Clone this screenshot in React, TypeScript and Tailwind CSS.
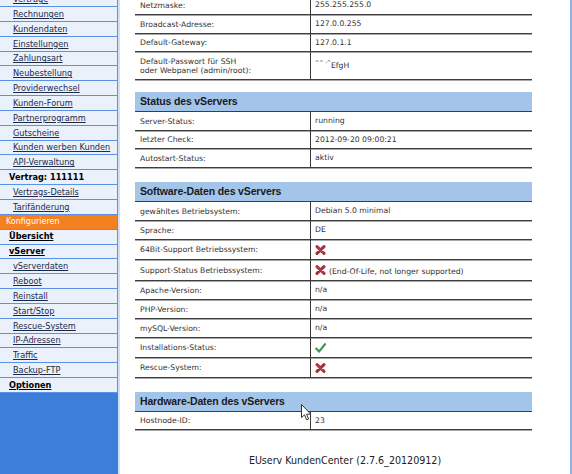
import React from "react";

type Item = { label: string; kind: "sub" | "top" | "active" };

const items: Item[] = [
  { label: "Verträge", kind: "sub" },
  { label: "Rechnungen", kind: "sub" },
  { label: "Kundendaten", kind: "sub" },
  { label: "Einstellungen", kind: "sub" },
  { label: "Zahlungsart", kind: "sub" },
  { label: "Neubestellung", kind: "sub" },
  { label: "Providerwechsel", kind: "sub" },
  { label: "Kunden-Forum", kind: "sub" },
  { label: "Partnerprogramm", kind: "sub" },
  { label: "Gutscheine", kind: "sub" },
  { label: "Kunden werben Kunden", kind: "sub" },
  { label: "API-Verwaltung", kind: "sub" },
  { label: "Vertrag: 111111", kind: "top" },
  { label: "Vertrags-Details", kind: "sub" },
  { label: "Tarifänderung", kind: "sub" },
  { label: "Konfigurieren", kind: "active" },
  { label: "Übersicht", kind: "top" },
  { label: "vServer", kind: "top" },
  { label: "vServerdaten", kind: "sub" },
  { label: "Reboot", kind: "sub" },
  { label: "Reinstall", kind: "sub" },
  { label: "Start/Stop", kind: "sub" },
  { label: "Rescue-System", kind: "sub" },
  { label: "IP-Adressen", kind: "sub" },
  { label: "Traffic", kind: "sub" },
  { label: "Backup-FTP", kind: "sub" },
  { label: "Optionen", kind: "top" },
];

const RedX = () => (
  <svg width="11" height="10" viewBox="0 0 11 10" className="shrink-0">
    <path d="M2 1.6 L9 8.4 M9 1.6 L2 8.4" stroke="#a5303a" strokeWidth="3" strokeLinecap="round" />
    <path d="M2.5 2 L8.5 8" stroke="#c9545c" strokeWidth="0.8" strokeLinecap="round" />
  </svg>
);

const Check = () => (
  <svg width="11" height="10" viewBox="0 0 11 10" className="shrink-0">
    <path d="M1.2 5.6 L4 8.6 L10 1.2" stroke="#3a9a52" strokeWidth="2.2" fill="none" strokeLinecap="round" strokeLinejoin="round" />
  </svg>
);

type Row = { label: React.ReactNode; value: React.ReactNode; h: string };

function Table({ rows }: { rows: Row[] }) {
  return (
    <div>
      {rows.map((r, i) => (
        <div
          key={i}
          className={`flex ${r.h} border-b border-[#3e3e3e] shadow-[0_1px_0_#a8a8a8]`}
        >
          <div className="w-[175px] shrink-0 pl-[5px] flex items-center leading-[9px]">{r.label}</div>
          <div className="flex-1 border-l border-[#3a3a3a] pl-[4px] flex items-center gap-[3px]">{r.value}</div>
        </div>
      ))}
    </div>
  );
}

function Header({ title }: { title: string }) {
  return (
    <div className="h-[20px] bg-[#a3c5e9] border-b border-[#3e3e3e] flex items-center pl-[5px] text-[10.5px] font-bold text-[#1b1b1b] [font-family:'Liberation_Sans',Arial,sans-serif] tracking-[-0.15px]">
      {title}
    </div>
  );
}

export default function App() {
  return (
    <div className="w-[572px] h-[474px] overflow-hidden flex bg-white [font-family:'DejaVu_Sans',Verdana,sans-serif]">
      {/* Sidebar */}
      <div className="w-[120px] shrink-0 flex flex-col border-r-2 border-[#cfe0f7] bg-[#3d7edb]">
        <div className="-mt-[7.8px] flex flex-col">
          {items.map((it, i) => {
            if (it.kind === "active") {
              return (
                <div
                  key={i}
                  className="h-[14.85px] bg-[#f4811f] border-b border-r border-[#5a92e6] flex items-center pl-[6px] text-[8px] text-white"
                >
                  {it.label}
                </div>
              );
            }
            return (
              <div
                key={i}
                className={`h-[14.85px] bg-[#eaf1fb] border-b border-r border-[#5a92e6] flex items-center text-[8.2px] ${
                  it.kind === "top" ? "pl-[9px] font-bold text-black" : "pl-[13px] text-[#1c2a4a]"
                }`}
              >
                <span className={it.kind === "top" && it.label.startsWith("Vertrag") ? "" : "underline underline-offset-[1px]"}>
                  {it.label}
                </span>
              </div>
            );
          })}
        </div>
      </div>

      {/* Main */}
      <div className="flex-1 border-r-2 border-[#8db3ea] relative">
        <div className="-mt-[4px] ml-[15px] w-[397px] text-[7.7px] text-[#333]">
          <Table
            rows={[
              { label: "Netzmaske:", value: "255.255.255.0", h: "h-[19px]" },
              { label: "Broadcast-Adresse:", value: "127.0.0.255", h: "h-[19px]" },
              { label: "Default-Gateway:", value: "127.0.1.1", h: "h-[18px]" },
              {
                label: (
                  <span>
                    Default-Passwort für SSH
                    <br />
                    oder Webpanel (admin/root):
                  </span>
                ),
                value: (
                  <span>
                    <span className="text-[5px] align-super">^^ -^</span>EfgH
                  </span>
                ),
                h: "h-[28px]",
              },
            ]}
          />

          <div className="mt-[12px]">
            <Header title="Status des vServers" />
            <Table
              rows={[
                { label: "Server-Status:", value: "running", h: "h-[19px]" },
                { label: "letzter Check:", value: "2012-09-20 09:00:21", h: "h-[18px]" },
                { label: "Autostart-Status:", value: "aktiv", h: "h-[19px]" },
              ]}
            />
          </div>

          <div className="mt-[14px]">
            <Header title="Software-Daten des vServers" />
            <Table
              rows={[
                { label: "gewähltes Betriebsystem:", value: "Debian 5.0 minimal", h: "h-[19px]" },
                { label: "Sprache:", value: "DE", h: "h-[19px]" },
                { label: "64Bit-Support Betriebssystem:", value: <RedX />, h: "h-[20px]" },
                {
                  label: "Support-Status Betriebssystem:",
                  value: (
                    <>
                      <RedX />
                      <span className="mt-[3px]">(End-Of-Life, not longer supported)</span>
                    </>
                  ),
                  h: "h-[21px]",
                },
                { label: "Apache-Version:", value: "n/a", h: "h-[19px]" },
                { label: "PHP-Version:", value: "n/a", h: "h-[19px]" },
                { label: "mySQL-Version:", value: "n/a", h: "h-[19px]" },
                { label: "Installations-Status:", value: <Check />, h: "h-[20px]" },
                { label: "Rescue-System:", value: <RedX />, h: "h-[20px]" },
              ]}
            />
          </div>

          <div className="mt-[14px]">
            <Header title="Hardware-Daten des vServers" />
            <Table rows={[{ label: "Hostnode-ID:", value: "23", h: "h-[18px]" }]} />
          </div>
        </div>

        <div className="mt-[23px] text-center text-[10.6px] text-[#222] [font-family:'DejaVu_Sans_Condensed','Liberation_Sans',sans-serif]">
          EUserv KundenCenter (2.7.6_20120912)
        </div>

        {/* mouse cursor */}
        <svg
          className="absolute left-[181px] top-[404px]"
          width="12"
          height="18"
          viewBox="0 0 12 18"
        >
          <path
            d="M0.5 0.5 L0.5 13.5 L3.5 10.8 L5.6 15.8 L7.6 15 L5.6 10.2 L9.8 10.2 Z"
            fill="#ffffff"
            stroke="#333"
            strokeWidth="1"
            strokeLinejoin="round"
          />
        </svg>
      </div>
    </div>
  );
}
